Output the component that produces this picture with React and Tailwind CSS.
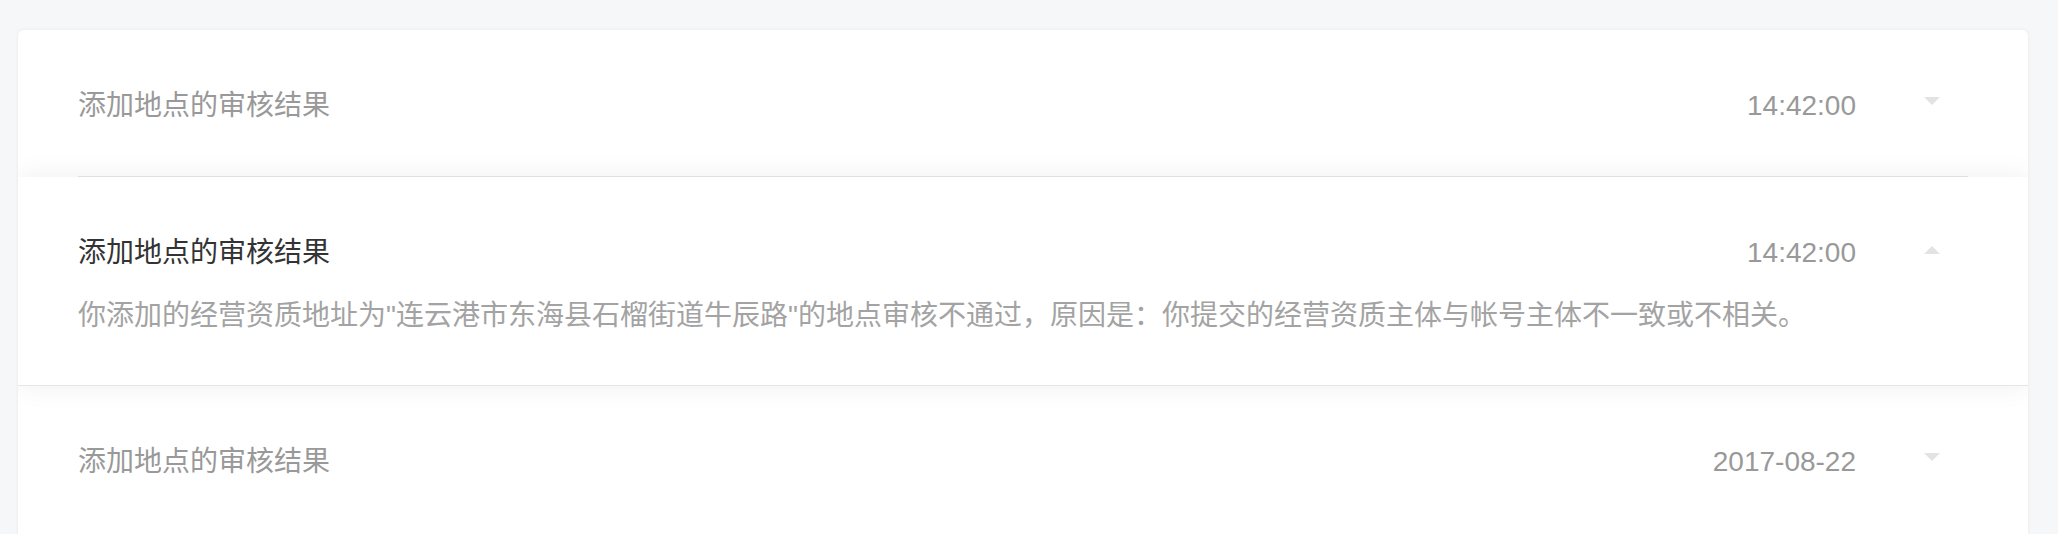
const font = { fontFamily: "'Liberation Sans', 'Noto Sans CJK SC', sans-serif" };

const items = [
    { title: "添加地点的审核结果", time: "14:42:00", open: false },
    {
        title: "添加地点的审核结果",
        time: "14:42:00",
        open: true,
        detail: "你添加的经营资质地址为\"连云港市东海县石榴街道牛辰路\"的地点审核不通过，原因是：你提交的经营资质主体与帐号主体不一致或不相关。",
    },
    { title: "添加地点的审核结果", time: "2017-08-22", open: false },
];

function Caret({ up }) {
    return up ? (
        <span className="block w-0 h-0 border-l-[8px] border-r-[8px] border-b-[8px] border-l-transparent border-r-transparent border-b-[#e3e3e3] mb-[7px]" />
    ) : (
        <span className="block w-0 h-0 border-l-[8px] border-r-[8px] border-t-[8px] border-l-transparent border-r-transparent border-t-[#e3e3e3] mb-[5px]" />
    );
}

function Row({ item, last }) {
    if (item.open) {
        return (
            <div className="relative z-10 bg-white shadow-[0_0_26px_rgba(0,0,0,0.07)] border-b border-[#e6e6e6] pl-[60px] pr-[88px] pt-[56px] pb-[49px]">
                <div className="flex items-center h-[40px]">
                    <div className="flex-1 text-[28px] text-[#333]">{item.title}</div>
                    <div className="text-[28px] text-[#999]">{item.time}</div>
                    <div className="ml-[68px]"><Caret up /></div>
                </div>
                <div className="mt-[23px] text-[28px] leading-[40px] text-[#a3a3a3]">{item.detail}</div>
            </div>
        );
    }
    return (
        <div className={`px-[60px] ${last ? "pb-[40px]" : ""}`}>
            <div className={`flex items-center h-[147px] pr-[28px] ${last ? "" : "border-b border-[#e8e8e8]"}`}>
                <div className="flex-1 pt-[5px] text-[28px] text-[#999]">{item.title}</div>
                <div className="pt-[5px] text-[28px] text-[#999]">{item.time}</div>
                <div className="ml-[68px]"><Caret /></div>
            </div>
        </div>
    );
}

export default function App() {
    return (
        <div className="min-h-screen bg-[#f6f7f9] pt-[30px] pl-[18px] pr-[30px] pb-[30px]" style={font}>
            <div className="bg-white rounded-md overflow-hidden shadow-[0_0_4px_rgba(0,0,0,0.06)]">
                {items.map((item, i) => (
                    <Row key={i} item={item} last={i === items.length - 1} />
                ))}
            </div>
        </div>
    );
}
